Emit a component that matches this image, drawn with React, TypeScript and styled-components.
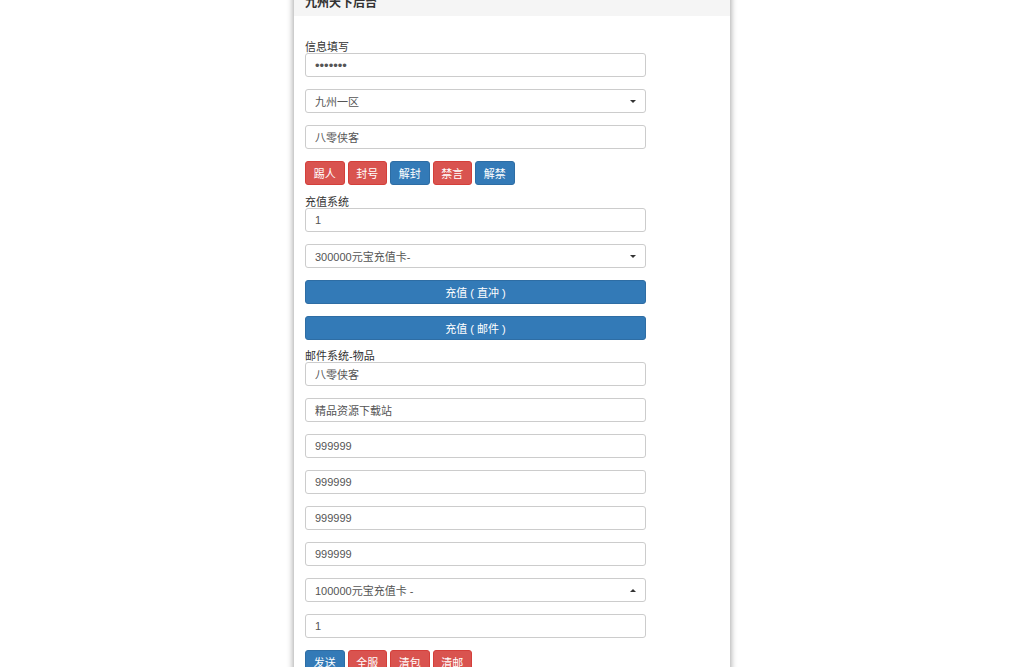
import styled, { createGlobalStyle } from "styled-components";

const Global = createGlobalStyle`
  body {
    margin: 0;
    background: #fff;
    font-family: "Liberation Sans", "Noto Sans CJK SC", sans-serif;
    color: #333;
    overflow: hidden;
  }
`;

const Page = styled.div`
  display: flex;
  justify-content: center;
`;

const Panel = styled.div`
  width: 436px;
  margin-top: -20px;
  background: #fff;
  box-shadow: 0 0 6px 1px rgba(0, 0, 0, 0.35);
`;

const Header = styled.div`
  background: #f5f5f5;
  padding: 15px 11px 5px;
  font-size: 12px;
  line-height: 16px;
  font-weight: bold;
  color: #333;
`;

const Body = styled.div`
  padding: 25px 11px 20px;
  width: 341px;
`;

const Label = styled.div`
  font-size: 11px;
  line-height: 12px;
  color: #333;
`;

const Field = styled.div<{ $dots?: boolean }>`
  box-sizing: border-box;
  height: 24px;
  margin-bottom: 12px;
  border: 1px solid #ccc;
  border-radius: 3px;
  padding: 0 9px;
  display: flex;
  align-items: center;
  justify-content: space-between;
  font-size: ${(p) => (p.$dots ? "13px" : "11px")};
  color: #555;
`;

const Caret = styled.span<{ $up?: boolean }>`
  width: 0;
  height: 0;
  border-left: 3px solid transparent;
  border-right: 3px solid transparent;
  ${(p) => (p.$up ? "border-bottom: 3px solid #333;" : "border-top: 3px solid #333;")}
`;

const Row = styled.div`
  display: flex;
  gap: 3px;
  margin-bottom: 11px;
`;

const Btn = styled.button<{ $kind: "red" | "blue"; $block?: boolean }>`
  box-sizing: border-box;
  height: 24px;
  width: ${(p) => (p.$block ? "100%" : "39.5px")};
  border: 1px solid ${(p) => (p.$kind === "red" ? "#d43f3a" : "#2e6da4")};
  background: ${(p) => (p.$kind === "red" ? "#d9534f" : "#337ab7")};
  color: #fff;
  border-radius: 3px;
  font-family: inherit;
  font-size: 11px;
  padding: 0;
`;

const Input = ({ v }: { v: string }) => <Field>{v}</Field>;
const Select = ({ v, up }: { v: string; up?: boolean }) => (
  <Field>
    {v}
    <Caret $up={up} />
  </Field>
);

export default function App() {
  return (
    <Page>
      <Global />
      <Panel>
        <Header>九州天下后台</Header>
        <Body>
          <Label>信息填写</Label>
          <Field $dots>•••••••</Field>
          <Select v="九州一区" />
          <Input v="八零侠客" />
          <Row>
            <Btn $kind="red">踢人</Btn>
            <Btn $kind="red">封号</Btn>
            <Btn $kind="blue">解封</Btn>
            <Btn $kind="red">禁言</Btn>
            <Btn $kind="blue">解禁</Btn>
          </Row>
          <Label>充值系统</Label>
          <Input v="1" />
          <Select v="300000元宝充值卡-" />
          <Row style={{ marginBottom: 12 }}>
            <Btn $kind="blue" $block>充值 ( 直冲 )</Btn>
          </Row>
          <Row style={{ marginBottom: 10 }}>
            <Btn $kind="blue" $block>充值 ( 邮件 )</Btn>
          </Row>
          <Label>邮件系统-物品</Label>
          <Input v="八零侠客" />
          <Input v="精品资源下载站" />
          <Input v="999999" />
          <Input v="999999" />
          <Input v="999999" />
          <Input v="999999" />
          <Select v="100000元宝充值卡 -" up />
          <Input v="1" />
          <Row>
            <Btn $kind="blue">发送</Btn>
            <Btn $kind="red">全服</Btn>
            <Btn $kind="red">清包</Btn>
            <Btn $kind="red">清邮</Btn>
          </Row>
        </Body>
      </Panel>
    </Page>
  );
}
